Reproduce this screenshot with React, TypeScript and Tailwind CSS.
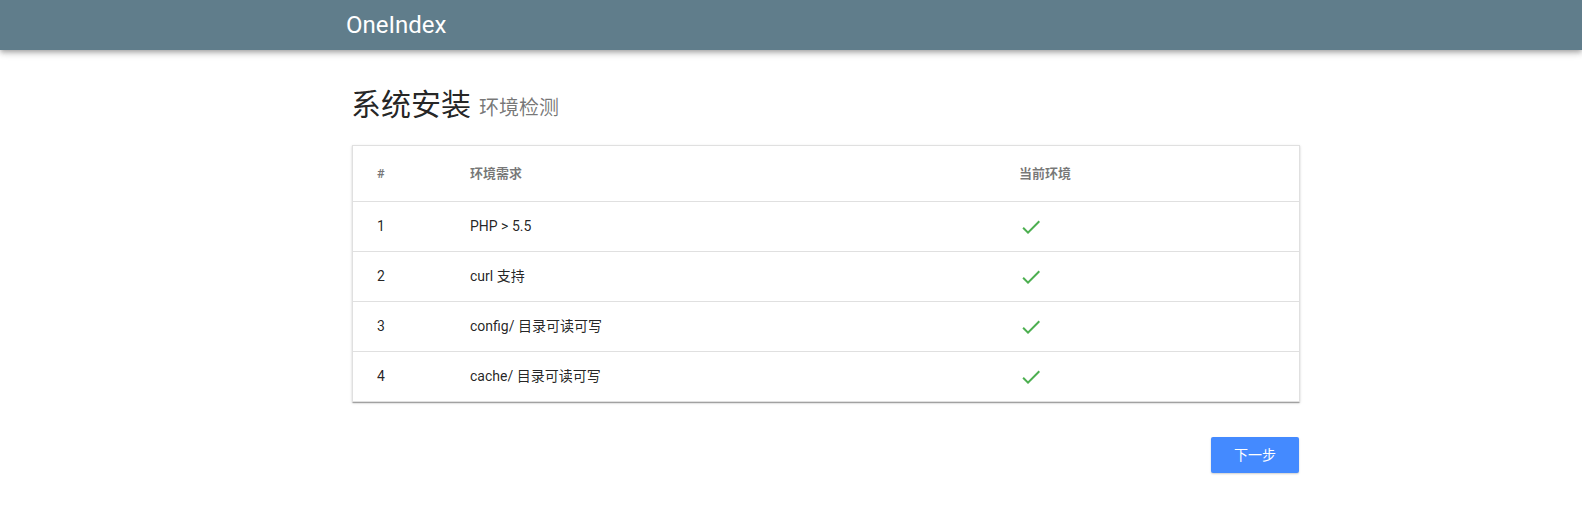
import React from 'react';

// 环境检测 rows
const checks = [
  { id: 1, name: 'PHP > 5.5', ok: true },
  { id: 2, name: 'curl 支持', ok: true },
  { id: 3, name: 'config/ 目录可读可写', ok: true },
  { id: 4, name: 'cache/ 目录可读可写', ok: true },
];

const font = "font-['Roboto','Noto_Sans_CJK_SC',sans-serif]";

function CheckIcon() {
  return (
    <svg width="24" height="24" viewBox="0 0 24 24" className="fill-[#4caf50]">
      <path d="M9 16.17L4.83 12l-1.42 1.41L9 19 21 7l-1.41-1.41z" />
    </svg>
  );
}

export default function App() {
  return (
    <div className={`min-h-screen bg-white ${font}`}>
      {/* 顶部栏 */}
      <header className="h-[50px] bg-[#607d8b] flex items-center pl-[346px] shadow-[0_2px_4px_-1px_rgba(0,0,0,0.2),0_4px_5px_0_rgba(0,0,0,0.14),0_1px_10px_0_rgba(0,0,0,0.12)] relative">
        <span className="text-white text-[24px] leading-none">OneIndex</span>
      </header>

      <main className="ml-[352px] w-[948px] pt-[37px]">
        {/* 标题 */}
        <h1 className="text-[30px] leading-[36px] text-[rgba(0,0,0,0.87)] flex items-baseline gap-[8px] -ml-[1px]">
          系统安装
          <small className="text-[20px] text-[rgba(0,0,0,0.54)]">环境检测</small>
        </h1>

        {/* 检测表格 */}
        <div className="mt-[19px] border border-[rgba(0,0,0,0.12)] shadow-[0_2px_1px_-1px_rgba(0,0,0,0.2),0_1px_1px_0_rgba(0,0,0,0.14),0_1px_3px_0_rgba(0,0,0,0.12)]">
          <div className="grid grid-cols-[93px_549px_1fr] h-[55px] items-center text-[13px] font-bold text-[rgba(0,0,0,0.54)]">
            <div className="pl-6">#</div>
            <div className="pl-6">环境需求</div>
            <div className="pl-6">当前环境</div>
          </div>
          {checks.map((c) => (
            <div
              key={c.id}
              className="grid grid-cols-[93px_549px_1fr] h-[50px] items-center border-t border-[rgba(0,0,0,0.12)] text-[14px] text-[rgba(0,0,0,0.87)]"
            >
              <div className="pl-6">{c.id}</div>
              <div className="pl-6">{c.name}</div>
              <div className="pl-6 flex">{c.ok && <CheckIcon />}</div>
            </div>
          ))}
        </div>

        {/* 下一步 */}
        <div className="flex justify-end mt-[35px] pr-px">
          <button className="w-[88px] h-[36px] rounded-[2px] bg-[#448aff] text-white text-[14px] shadow-[0_1px_2px_rgba(0,0,0,0.2)]">
            下一步
          </button>
        </div>
      </main>
    </div>
  );
}
